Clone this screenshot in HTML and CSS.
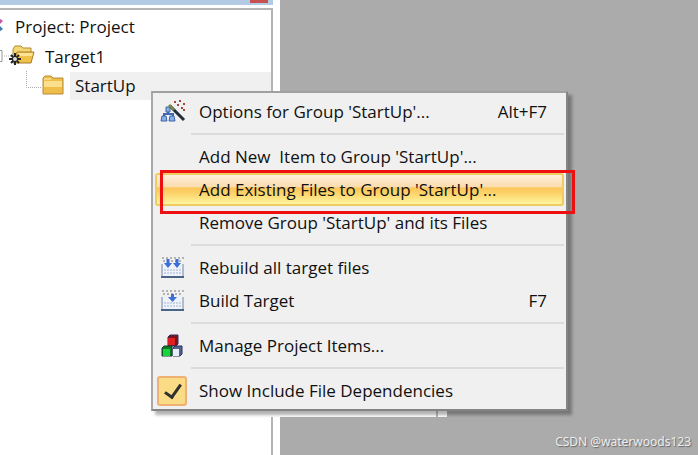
FILE: index.html
```
<!DOCTYPE html>
<html lang="en">
<head>
    <meta charset="UTF-8">
    <meta name="viewport" content="width=device-width, initial-scale=1.0">
    <title>Project</title>
    <link rel="stylesheet" href="styles.css">
</head>
<body>
    <div class="workspace">
        <aside class="panel">
            <div class="panel-title">
                <button type="button" class="close" aria-label="Close"></button>
            </div>
            <ul class="tree">
                <li class="tree-row root">
                    <svg class="root-icon" width="6" height="18" viewBox="0 0 6 18">
                        <path d="M-3 2l2-1 4 3-3 3-3-1z" fill="#c25aa8"/>
                        <path d="M-3 10l3-1 3 3-4 3-2-1z" fill="#3f7fae"/>
                    </svg>
                    <span>Project: Project</span>
                </li>
                <li class="tree-row target">
                    <svg width="36" height="24" viewBox="0 0 36 24">
                        <path d="M-6 6.500h8v11h-8" fill="#fff" stroke="#999"/>
                        <path d="M4 12h8" stroke="#aaa" stroke-dasharray="1 1"/>
                        <path d="M13 18V5l2-3h6l2 2h8v4" fill="#f3d775" stroke="#b08a35"/>
                        <path d="M13 19l4-11h17l-3 11z" fill="#f0c24a" stroke="#a87d2a"/>
                        <path d="M18 9h15l-1 3H17z" fill="#fbe391"/>
                        <path d="M15 9v12M9 15h12M11 11l8 8M19 11l-8 8" stroke="#222" stroke-width="2"/>
                        <circle cx="15" cy="15" r="2" fill="#ddd"/>
                    </svg>
                    <span>Target1</span>
                </li>
                <li class="tree-row group">
                    <svg width="39" height="30" viewBox="0 0 39 30">
                        <path d="M1.500 0v16.500H17" fill="none" stroke="#aaa" stroke-dasharray="1 1"/>
                        <path d="M18 23V7l2-2h6l2 2h10v16z" fill="#efbd49" stroke="#b68a34"/>
                        <path d="M19 10h18v6H19z" fill="#fae08c"/>
                        <path d="M19 8h7" stroke="#fff2b8"/>
                    </svg>
                    <span class="selected">StartUp</span>
                </li>
            </ul>
        </aside>
        <main class="editor"></main>
        <div class="scroll-end"></div>

        <div class="menu" role="menu">
            <button type="button" class="item" role="menuitem">
                <svg class="icon" width="26" height="26" viewBox="0 0 26 26">
                    <path d="M8 9v7M4 18v-3h9v3" fill="none" stroke="#4169ac" stroke-width="2"/>
                    <path d="M6 8h4v5H6zM2 17h4l1 5H1zM10 17h4l1 5H9z" fill="#88b0e8" stroke="#3e65a5"/>
                    <path d="M10 7l14 14" stroke="#222b38" stroke-width="3"/>
                    <path d="M9 6l5 5" stroke="#7b8350" stroke-width="3"/>
                    <path d="M14 3h2M19 2h2M17 6h2M23 5h2M21 9h2M23 11h2" stroke="#a5433d" stroke-width="2"/>
                </svg>
                <span>Options for Group 'StartUp'...</span>
                <kbd>Alt+F7</kbd>
            </button>
            <hr>
            <button type="button" class="item" role="menuitem">
                <span>Add New&nbsp; Item to Group 'StartUp'...</span>
            </button>
            <button type="button" class="item active" role="menuitem">
                <span>Add Existing Files to Group 'StartUp'...</span>
            </button>
            <button type="button" class="item" role="menuitem">
                <span>Remove Group 'StartUp' and its Files</span>
            </button>
            <hr>
            <button type="button" class="item" role="menuitem">
                <svg class="icon" width="26" height="26" viewBox="0 0 26 26">
                    <path d="M2 9v13h21V9" fill="#eef3fb" stroke="#7186a6" stroke-width="1"/>
                    <path d="M1 22h23" stroke="#4a6486" stroke-width="2"/>
                    <path d="M4 15h17M4 18h17" stroke="#a2b5d0" stroke-dasharray="2 1"/>
                    <path d="M2 3h22M3 6h20" stroke="#777" stroke-dasharray="2 2"/>
                    <path d="M8 4v6M17 4v6" stroke="#3c6fd6" stroke-width="3"/>
                    <path d="M4 8h8l-4 5zM13 8h8l-4 5z" fill="#3c6fd6"/>
                </svg>
                <span>Rebuild all target files</span>
            </button>
            <button type="button" class="item" role="menuitem">
                <svg class="icon" width="26" height="26" viewBox="0 0 26 26">
                    <path d="M2 9v13h21V9" fill="#eef3fb" stroke="#7186a6" stroke-width="1"/>
                    <path d="M1 22h23" stroke="#4a6486" stroke-width="2"/>
                    <path d="M4 15h17M4 18h17" stroke="#a2b5d0" stroke-dasharray="2 1"/>
                    <path d="M2 3h22M3 6h20" stroke="#777" stroke-dasharray="2 2"/>
                    <path d="M12.500 6v4" stroke="#3c6fd6" stroke-width="3"/>
                    <path d="M8 9h9l-4.500 5z" fill="#3c6fd6"/>
                </svg>
                <span>Build Target</span>
                <kbd>F7</kbd>
            </button>
            <hr>
            <button type="button" class="item" role="menuitem">
                <svg class="icon" width="26" height="26" viewBox="0 0 26 26">
                    <path d="M8 4l2-2h8v9l-2 2H8z" fill="#7c1220" stroke="#33305c"/>
                    <path d="M8 5h7v7H8z" fill="#e02020"/>
                    <path d="M2 15l2-2h8v10H2z" fill="#0a7a22" stroke="#1e3b35"/>
                    <path d="M3 16h7v7H3z" fill="#19d43c"/>
                    <path d="M13 15l2-2h7v8l-2 2h-7z" fill="#56628e" stroke="#26305c"/>
                    <path d="M13 16h6v7h-6z" fill="#e8eef8"/>
                </svg>
                <span>Manage Project Items...</span>
            </button>
            <hr>
            <label class="item check">
                <input type="checkbox" checked>
                <span>Show Include File Dependencies</span>
            </label>
            <div class="marker"></div>
        </div>

        <div class="watermark">CSDN @waterwoods123</div>
    </div>
</body>
</html>
```
FILE: styles.css
```
* {
    box-sizing: border-box;
}

body {
    margin: 0;
    font-family: "Open Sans", "Noto Sans", sans-serif;
    font-size: 17px;
    color: #111;
    background-color: #ababab;
}

.workspace {
    position: relative;
    display: flex;
    min-height: 100vh;
    overflow: hidden;
}

.panel {
    display: flex;
    flex-direction: column;
    width: 280px;
    padding-right: 7px;
    background-color: #fff;
}

.panel-title {
    display: flex;
    justify-content: flex-end;
    height: 5px;
    padding-right: 5px;
    background-color: #b4cbe6;
}

.close {
    width: 18px;
    height: 3px;
    padding: 0;
    border: none;
    background-color: #c75050;
}

.tree {
    flex: 1;
    margin: 3px 0 0;
    padding: 1px 0 0;
    list-style: none;
    border-top: 2px solid #b4b4b4;
    border-right: 2px solid #b4b4b4;
}

.tree-row {
    display: flex;
    align-items: center;
    height: 30px;
    white-space: nowrap;
}

.root {
    gap: 9px;
}

.target {
    gap: 9px;
}

.group {
    padding-left: 25px;
    gap: 6px;
}

.selected {
    flex: 1;
    padding-left: 5px;
    line-height: 28px;
    background-color: #f0f0f0;
}

.editor {
    flex: 1;
    background-color: #ababab;
}

/* end of the scrollbar that shows below the menu */
.scroll-end {
    position: absolute;
    left: 151px;
    top: 410px;
    width: 296px;
    height: 7px;
    background: linear-gradient(to right, #fff 285px, #bbb 285px, #bbb 287px, #fff 287px);
}

.menu {
    position: absolute;
    left: 151px;
    top: 91px;
    width: 417px;
    padding: 2px;
    background-color: #f0f0f0;
    border: 2px solid #848484;
    border-left-color: #a8a8a8;
    border-top-color: #a0a0a0;
    box-shadow: 4px 4px 3px rgba(0, 0, 0, 0.3);
}

.item {
    position: relative;
    display: flex;
    align-items: center;
    width: 100%;
    height: 33px;
    padding: 0 16px 0 43px;
    border: 1px solid transparent;
    background: none;
    font: inherit;
    color: inherit;
    text-align: left;
    white-space: nowrap;
}

.item span {
    flex: 1;
}

.item kbd {
    font: inherit;
}

.icon {
    position: absolute;
    left: 4px;
}

.active {
    border: 2px solid #f0cc60;
    border-radius: 3px;
    padding: 0 15px 0 42px;
    background: linear-gradient(#fdf0dc, #fbdcae 40%, #fbc65a 45%, #fdd56c 65%, #fff5a0);
}

.menu hr {
    height: 2px;
    margin: 5px 0 5px 36px;
    border: none;
    background-color: #dcdcdc;
}

.check input {
    position: absolute;
    left: 1px;
    width: 30px;
    height: 30px;
    margin: 0;
    appearance: none;
    border: 2px solid #efb073;
    border-radius: 3px;
    background-color: #fbdc86;
}

.check input::before {
    content: "";
    position: absolute;
    left: 9px;
    top: 3px;
    width: 7px;
    height: 14px;
    border: solid #303030;
    border-width: 0 3px 3px 0;
    transform: rotate(35deg);
}

/* red frame round the highlighted entry */
.marker {
    position: absolute;
    left: 7px;
    top: 77px;
    right: -9px;
    height: 44px;
    border: 3px solid #ee1010;
    pointer-events: none;
}

.watermark {
    position: absolute;
    right: 7px;
    bottom: 5px;
    font-family: "Noto Sans", sans-serif;
    font-size: 12px;
    color: #eee;
    text-shadow: 1px 1px 1px #666;
}
```
